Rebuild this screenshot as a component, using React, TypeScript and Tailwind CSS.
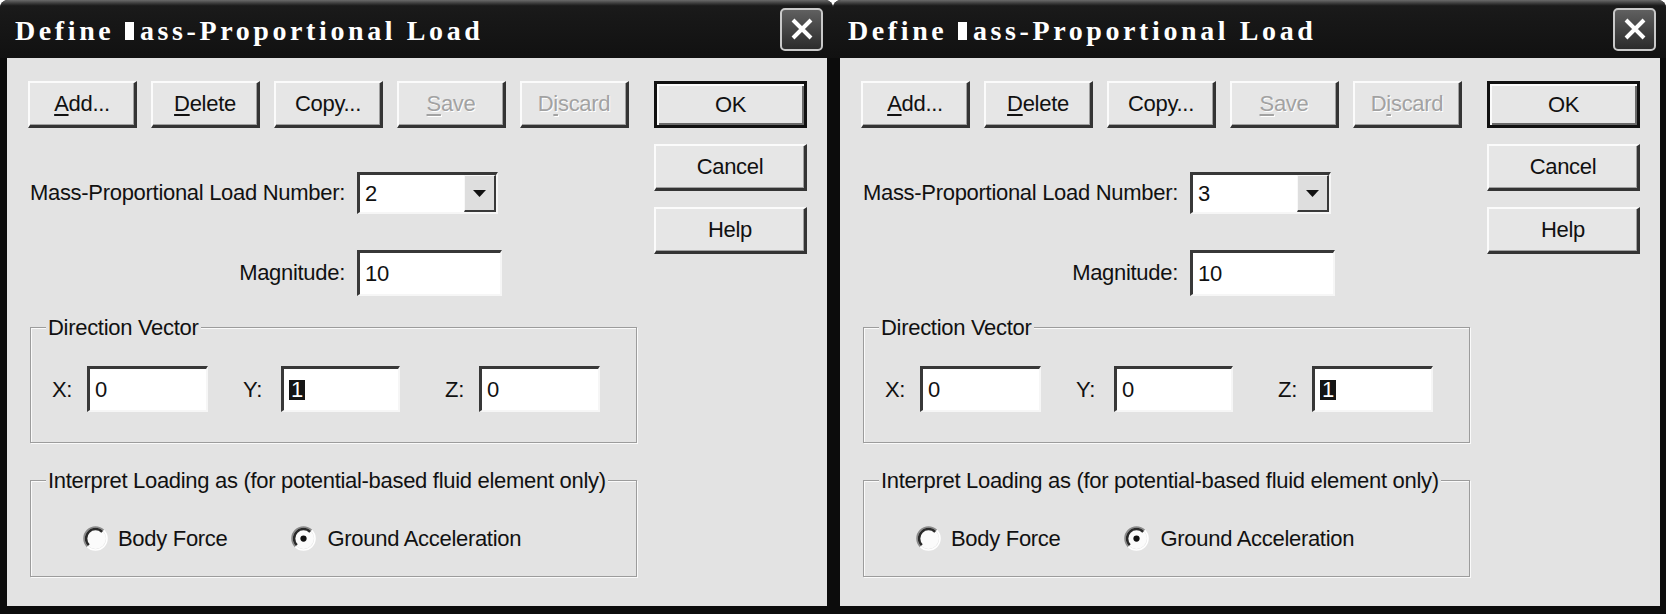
import React from 'react';

type BtnProps = {
  pre?: string;
  u?: string;
  post?: string;
  disabled?: boolean;
  primary?: boolean;
  className?: string;
};

const Button: React.FC<BtnProps> = ({ pre = '', u = '', post = '', disabled, primary, className = '' }) => {
  const frame = primary
    ? 'border-[3px] border-[#111] shadow-[inset_2px_2px_0_#fbfbfb,inset_-2px_-2px_0_#6a6a6a]'
    : 'border-t-2 border-l-2 border-t-[#fbfbfb] border-l-[#fbfbfb] border-b-[3px] border-r-[3px] border-b-[#343434] border-r-[#343434] shadow-[inset_-1px_-1px_0_#a0a0a0]';
  return (
    <div className={`flex items-center justify-center h-[47px] bg-[#e6e6e6] ${frame} ${className}`}>
      <span
        className={`leading-none ${disabled ? 'text-[#a2a2a2] [text-shadow:1px_1px_0_#ffffff]' : 'text-[#111]'}`}
      >
        {pre}
        {u && <span className="underline underline-offset-[3px] decoration-[2px]">{u}</span>}
        {post}
      </span>
    </div>
  );
};

const Field: React.FC<{ className?: string; children?: React.ReactNode }> = ({ className = '', children }) => (
  <div
    className={`flex items-center h-[46px] bg-white pl-[5px] border-t-[3px] border-l-[3px] border-t-[#383838] border-l-[#383838] border-b-2 border-r-2 border-b-[#f6f6f6] border-r-[#f6f6f6] ${className}`}
  >
    {children}
  </div>
);

const Combo: React.FC<{ value: string }> = ({ value }) => (
  <div className="ml-[12px] flex items-stretch w-[141px] h-[42px] bg-white border-t-[3px] border-l-[3px] border-t-[#383838] border-l-[#383838] border-b-2 border-r-2 border-b-[#f6f6f6] border-r-[#f6f6f6]">
    <div className="flex-1 flex items-center pl-[5px]">{value}</div>
    <div className="w-[32px] flex items-center justify-center bg-[#dedede] border-t border-l border-t-[#f8f8f8] border-l-[#f8f8f8] border-b-2 border-r-2 border-b-[#3a3a3a] border-r-[#3a3a3a]">
      <svg width="13" height="7" viewBox="0 0 13 7">
        <polygon points="0,0 13,0 6.5,7" fill="#111" />
      </svg>
    </div>
  </div>
);

const Group: React.FC<{ title: string; className?: string; children?: React.ReactNode }> = ({ title, className = '', children }) => (
  <div className={`relative ml-[2px] w-[607px] border border-[#9c9c9c] shadow-[1px_1px_0_#fafafa,inset_1px_1px_0_#fafafa] ${className}`}>
    <span className="absolute left-[15px] top-[-13px] px-[2px] bg-[#e3e3e3] leading-[26px] whitespace-nowrap">{title}</span>
    {children}
  </div>
);

const Radio: React.FC<{ checked?: boolean }> = ({ checked }) => (
  <svg width="25" height="25" viewBox="0 0 24 24">
    <circle cx="12" cy="12" r="10" fill="#fbfbfb" />
    <path d="M4.2 19.8 A11 11 0 0 1 19.8 4.2" fill="none" stroke="#8a8a8a" strokeWidth="1.5" />
    <path d="M5.6 18.4 A9 9 0 0 1 18.4 5.6" fill="none" stroke="#2a2a2a" strokeWidth="2.4" />
    <path d="M19.8 4.2 A11 11 0 0 1 4.2 19.8" fill="none" stroke="#ffffff" strokeWidth="1.5" />
    {checked && <circle cx="12" cy="12" r="3" fill="#111" />}
  </svg>
);

const Sel: React.FC<{ v: string }> = ({ v }) => (
  <span className="inline-block bg-[#151515] text-white leading-[20px] px-[2px]">{v}</span>
);

const Dialog: React.FC<{ num: string; sel: 'y' | 'z' }> = ({ num, sel }) => (
  <div className="w-[833px] h-[614px] flex flex-col rounded-t-[8px] overflow-hidden bg-[#0c0c0c]">
    {/* title bar */}
    <div className="h-[58px] shrink-0 flex items-center justify-between pl-[15px] pr-[10px] bg-linear-to-b from-[#6a6a6a] via-[#1a1a1a] via-10% to-[#111]">
      <span className="font-['Liberation_Serif',serif] font-bold text-[28px] tracking-[3.6px] text-white leading-none pt-[3px] whitespace-nowrap">
        Define <span className="inline-block w-[9px] h-[18px] bg-white mr-[6px]" />ass-Proportional Load
      </span>
      <div className="w-[43px] h-[43px] rounded-[5px] border-2 border-[#c9c9c9] bg-linear-to-b from-[#606060] to-[#2c2c2c] flex items-center justify-center">
        <svg width="22" height="22" viewBox="0 0 22 22">
          <path d="M2 2 L20 20 M20 2 L2 20" stroke="#ffffff" strokeWidth="4" />
        </svg>
      </div>
    </div>

    {/* client */}
    <div className="flex-1 flex pl-[7px] pr-[6px] pb-[8px]">
      <div className="flex-1 flex bg-[#e3e3e3] pl-[21px] pt-[23px] text-[22px] tracking-[-0.3px] text-[#111] font-['Liberation_Sans',Arial,sans-serif]">
        <div className="w-[609px] flex flex-col">
          <div className="flex gap-[14px]">
            <Button className="w-[109px]" u="A" post="dd..." />
            <Button className="w-[109px]" u="D" post="elete" />
            <Button className="w-[109px]" pre="Copy..." />
            <Button className="w-[109px]" u="S" post="ave" disabled />
            <Button className="w-[109px]" pre="D" u="i" post="scard" disabled />
          </div>

          <div className="flex items-center mt-[44px]">
            <div className="w-[317px] text-right leading-none whitespace-nowrap">Mass-Proportional Load Number:</div>
            <Combo value={num} />
          </div>

          <div className="flex items-center mt-[36px]">
            <div className="w-[317px] text-right leading-none">Magnitude:</div>
            <Field className="ml-[12px] w-[145px]">10</Field>
          </div>

          <Group title="Direction Vector" className="mt-[31px] h-[116px] pt-[38px]">
            <div className="flex items-center pl-[21px]">
              <span className="w-[35px]">X:</span>
              <Field className="w-[121px]">0</Field>
              <span className="ml-[35px] w-[38px]">Y:</span>
              <Field className="w-[119px]">{sel === 'y' ? <Sel v="1" /> : '0'}</Field>
              <span className="ml-[45px] w-[34px]">Z:</span>
              <Field className="w-[121px]">{sel === 'z' ? <Sel v="1" /> : '0'}</Field>
            </div>
          </Group>

          <Group title="Interpret Loading as (for potential-based fluid element only)" className="mt-[37px] h-[97px] pt-[43px]">
            <div className="flex items-center pl-[52px] h-[28px]">
              <Radio />
              <span className="ml-[10px]">Body Force</span>
              <span className="ml-[63px] flex items-center">
                <Radio checked />
                <span className="ml-[12px]">Ground Acceleration</span>
              </span>
            </div>
          </Group>
        </div>

        <div className="ml-[17px] w-[153px] flex flex-col gap-[16px]">
          <Button primary pre="OK" />
          <Button pre="Cancel" />
          <Button pre="Help" />
        </div>
      </div>
    </div>
  </div>
);

export default function App() {
  return (
    <div className="flex w-[1666px] h-[614px] bg-white overflow-hidden">
      <Dialog num="2" sel="y" />
      <Dialog num="3" sel="z" />
    </div>
  );
}
